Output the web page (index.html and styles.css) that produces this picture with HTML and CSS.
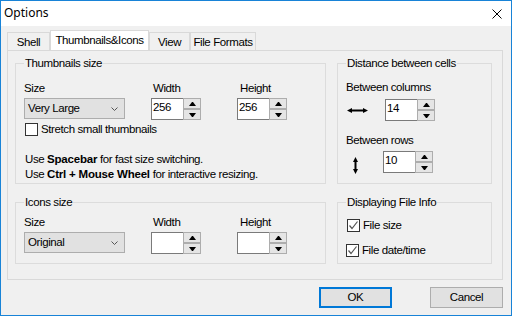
FILE: index.html
```html
<!DOCTYPE html>
<html>
<head>
<meta charset="utf-8">
<link rel="stylesheet" href="styles.css">
</head>
<body>
<div class="window">
  <div class="titlebar">
    <span class="title">Options</span>
    <svg class="close" width="10" height="10" viewBox="0 0 10 10"><path d="M0.5 0.5L9.5 9.5M9.5 0.5L0.5 9.5" stroke="#000" stroke-width="1" fill="none"/></svg>
  </div>
  <div class="body">
    <div class="tabs">
      <div class="tab t-shell">Shell</div>
      <div class="tab active t-thumb">Thumbnails&amp;Icons</div>
      <div class="tab t-view">View</div>
      <div class="tab t-ff">File Formats</div>
    </div>
    <div class="panel">
      <div class="grid">
        <fieldset class="group">
          <legend>Thumbnails size</legend>
          <div class="g-body pt12">
            <div class="fields">
              <div class="field f-size">
                <span class="lbl">Size</span>
                <div class="combo"><span>Very Large</span><svg width="7" height="4" viewBox="0 0 7 4"><path d="M0.5 0.5L3.5 3.5L6.5 0.5" stroke="#555" fill="none"/></svg></div>
              </div>
              <div class="field f-w">
                <span class="lbl">Width</span>
                <div class="spin"><div class="edit">256</div><div class="spin-btns"><span class="sb up"></span><span class="sb down"></span></div></div>
              </div>
              <div class="field f-h">
                <span class="lbl">Height</span>
                <div class="spin"><div class="edit">256</div><div class="spin-btns"><span class="sb up"></span><span class="sb down"></span></div></div>
              </div>
            </div>
            <div class="check-row mt3"><span class="cb"></span><span>Stretch small thumbnails</span></div>
            <p class="hint">Use <b>Spacebar</b> for fast size switching.<br>Use <b>Ctrl + Mouse Wheel</b> for interactive resizing.</p>
          </div>
        </fieldset>
        <fieldset class="group">
          <legend>Distance between cells</legend>
          <div class="g-body pt11">
            <span class="lbl">Between columns</span>
            <div class="dist-row mt5">
              <div class="icon-cell ic-h"><svg width="21" height="5" viewBox="0 0 21 5"><path d="M0 2.5L5 0V1.5H16V0L21 2.5L16 5V3.5H5V5Z" fill="#000"/></svg></div>
              <div class="spin"><div class="edit">14</div><div class="spin-btns"><span class="sb up"></span><span class="sb down"></span></div></div>
            </div>
            <span class="lbl mt13">Between rows</span>
            <div class="dist-row mt3">
              <div class="icon-cell ic-v"><svg width="5" height="17" viewBox="0 0 5 17"><path d="M2.5 0L5 5H3.5V12H5L2.5 17L0 12H1.5V5H0Z" fill="#000"/></svg></div>
              <div class="spin"><div class="edit">10</div><div class="spin-btns"><span class="sb up"></span><span class="sb down"></span></div></div>
            </div>
          </div>
        </fieldset>
        <fieldset class="group">
          <legend>Icons size</legend>
          <div class="g-body pt7">
            <div class="fields">
              <div class="field f-size">
                <span class="lbl">Size</span>
                <div class="combo"><span>Original</span><svg width="7" height="4" viewBox="0 0 7 4"><path d="M0.5 0.5L3.5 3.5L6.5 0.5" stroke="#555" fill="none"/></svg></div>
              </div>
              <div class="field f-w">
                <span class="lbl">Width</span>
                <div class="spin"><div class="edit"></div><div class="spin-btns"><span class="sb up"></span><span class="sb down"></span></div></div>
              </div>
              <div class="field f-h">
                <span class="lbl">Height</span>
                <div class="spin"><div class="edit"></div><div class="spin-btns"><span class="sb up"></span><span class="sb down"></span></div></div>
              </div>
            </div>
          </div>
        </fieldset>
        <fieldset class="group">
          <legend>Displaying File Info</legend>
          <div class="g-body pt10">
            <div class="check-row"><span class="cb checked"><svg width="11" height="11" viewBox="0 0 11 11"><path d="M1.5 5.5L4 8.5L9.5 1.5" stroke="#555" stroke-width="1.2" fill="none"/></svg></span><span>File size</span></div>
            <div class="check-row mt12"><span class="cb checked"><svg width="11" height="11" viewBox="0 0 11 11"><path d="M1.5 5.5L4 8.5L9.5 1.5" stroke="#555" stroke-width="1.2" fill="none"/></svg></span><span>File date/time</span></div>
          </div>
        </fieldset>
      </div>
    </div>
    <div class="footer">
      <button class="btn default">OK</button>
      <button class="btn">Cancel</button>
    </div>
  </div>
</div>
</body>
</html>
```
FILE: styles.css
```css
html, body {
  margin: 0;
  padding: 0;
}
body {
  font-family: "Liberation Sans", Arial, sans-serif;
  font-size: 11.5px;
  letter-spacing: -0.4px;
  line-height: 13px;
  color: #000;
}
.window {
  width: 512px;
  height: 316px;
  box-sizing: border-box;
  border: 1px solid #1883d7;
  background: #f0f0f0;
  display: flex;
  flex-direction: column;
}
.titlebar {
  height: 25px;
  flex: none;
  background: #fff;
  display: flex;
  align-items: center;
  justify-content: space-between;
  padding: 0 9px 0 3px;
}
.title {
  font-family: "Noto Sans", sans-serif;
  font-size: 12px;
  letter-spacing: 0;
  line-height: 16px;
  padding-bottom: 2px;
}
.close {
  display: block;
}
.body {
  flex: 1;
  padding: 4px 8px 0 6px;
  display: flex;
  flex-direction: column;
}
.tabs {
  display: flex;
  align-items: flex-end;
  height: 20px;
}
.tab {
  box-sizing: border-box;
  height: 18px;
  border: 1px solid #d9d9d9;
  border-bottom: 0;
  padding-top: 3px;
  text-align: center;
  background: #f0f0f0;
  white-space: nowrap;
}
.tab.active {
  height: 20px;
  background: #fff;
}
.t-shell { width: 43px; }
.t-thumb { width: 99px; }
.t-view { width: 41px; }
.t-ff { width: 66px; }
.panel {
  height: 230px;
  box-sizing: border-box;
  border: 1px solid #d9d9d9;
  padding: 6px 10px 0 7px;
}
.grid {
  display: grid;
  grid-template-columns: 311px 155px;
  grid-template-rows: 127px 68px;
  column-gap: 11px;
  row-gap: 12px;
}
.group {
  margin: 0;
  border: 1px solid #dcdcdc;
  padding: 0 8px;
  min-width: 0;
  box-sizing: border-box;
}
.group legend {
  padding: 0 1px;
  line-height: 13px;
}
.g-body {
  display: flex;
  flex-direction: column;
  align-items: flex-start;
}
.pt7 { padding-top: 7px; }
.pt10 { padding-top: 10px; }
.pt11 { padding-top: 11px; }
.pt12 { padding-top: 12px; }
.mt3 { margin-top: 3px; }
.mt5 { margin-top: 5px; }
.mt12 { margin-top: 12px; }
.mt13 { margin-top: 13px; }
.lbl {
  display: block;
  white-space: nowrap;
}
.fields {
  display: flex;
}
.field {
  display: flex;
  flex-direction: column;
  gap: 3px;
}
.f-size { width: 127px; }
.f-w { width: 86px; }
.f-w .lbl { padding-left: 2px; }
.f-h .lbl { padding-left: 3px; }
.combo {
  width: 101px;
  height: 21px;
  box-sizing: border-box;
  border: 1px solid #adadad;
  background: #e1e1e1;
  display: flex;
  align-items: center;
  justify-content: space-between;
  padding: 0 6px 0 3px;
}
.combo svg {
  display: block;
}
.spin {
  display: flex;
  width: 50px;
  height: 22px;
}
.edit {
  width: 32px;
  box-sizing: border-box;
  border: 1px solid #7a7a7a;
  border-right: 0;
  background: #fff;
  padding: 2px 0 0 1px;
}
.spin-btns {
  width: 18px;
  display: flex;
  flex-direction: column;
}
.sb {
  flex: 1;
  border: 1px solid #adadad;
  background: #e5e5e5;
  display: flex;
  align-items: center;
  justify-content: center;
}
.sb.up::after {
  content: "";
  width: 1px;
  height: 0;
  border-left: 3px solid transparent;
  border-right: 3px solid transparent;
  border-bottom: 4px solid #000;
}
.sb.down::after {
  content: "";
  width: 1px;
  height: 0;
  border-left: 3px solid transparent;
  border-right: 3px solid transparent;
  border-top: 4px solid #000;
}
.check-row {
  display: flex;
  align-items: center;
  white-space: nowrap;
}
.cb {
  width: 13px;
  height: 13px;
  box-sizing: border-box;
  border: 1px solid #333;
  background: #fff;
  margin-right: 3px;
  flex: none;
}
.cb svg {
  display: block;
}
.g-body > .check-row:first-child,
.fields + .check-row {
  margin-left: 1px;
}
.hint {
  margin: 16px 0 0 1px;
  line-height: 15px;
  white-space: nowrap;
}
.hint b {
  letter-spacing: -0.2px;
}
.dist-row {
  display: flex;
  align-items: center;
}
.icon-cell {
  display: flex;
  align-items: center;
}
.icon-cell svg {
  display: block;
}
.ic-h {
  width: 38px;
  padding-left: 1px;
}
.ic-v {
  width: 30px;
  padding-left: 7px;
  padding-top: 7px;
}
.footer {
  display: flex;
  justify-content: flex-end;
  gap: 38px;
  margin-top: 7px;
}
.btn {
  width: 73px;
  height: 21px;
  box-sizing: border-box;
  font: inherit;
  letter-spacing: inherit;
  color: #000;
  background: #e1e1e1;
  border: 1px solid #adadad;
  padding: 0;
  margin: 0;
}
.btn.default {
  border: 2px solid #0078d7;
}
```
